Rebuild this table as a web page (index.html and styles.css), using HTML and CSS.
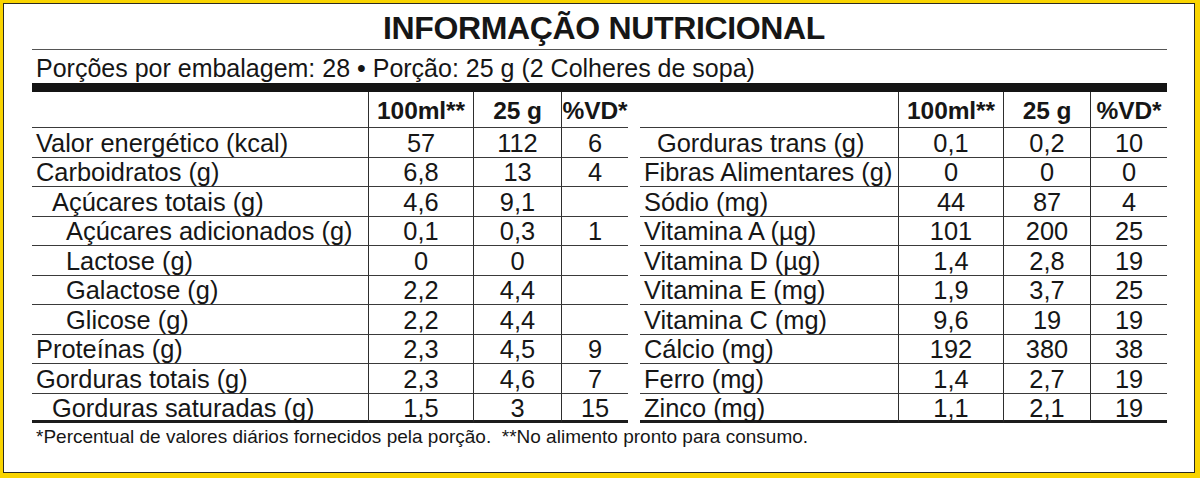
FILE: index.html
```html
<!DOCTYPE html>
<html lang="pt-BR">
<head>
<meta charset="utf-8">
<title>Informação Nutricional</title>
<link rel="stylesheet" href="styles.css">
</head>
<body>
<div class="panel">
  <h1 class="title">INFORMAÇÃO NUTRICIONAL</h1>
  <p class="serving">Porções por embalagem: 28 • Porção: 25 g (2 Colheres de sopa)</p>
  <div class="bar"></div>
  <div class="tables">
    <div class="grid grid-left">
      <div class="hd lab"></div><div class="hd">100ml**</div><div class="hd">25 g</div><div class="hd">%VD*</div>
      <div class="lab">Valor energético (kcal)</div><div>57</div><div>112</div><div>6</div>
      <div class="lab">Carboidratos (g)</div><div>6,8</div><div>13</div><div>4</div>
      <div class="lab in1">Açúcares totais (g)</div><div>4,6</div><div>9,1</div><div></div>
      <div class="lab in2">Açúcares adicionados (g)</div><div>0,1</div><div>0,3</div><div>1</div>
      <div class="lab in2">Lactose (g)</div><div>0</div><div>0</div><div></div>
      <div class="lab in2">Galactose (g)</div><div>2,2</div><div>4,4</div><div></div>
      <div class="lab in2">Glicose (g)</div><div>2,2</div><div>4,4</div><div></div>
      <div class="lab">Proteínas (g)</div><div>2,3</div><div>4,5</div><div>9</div>
      <div class="lab">Gorduras totais (g)</div><div>2,3</div><div>4,6</div><div>7</div>
      <div class="lab in1 last">Gorduras saturadas (g)</div><div class="last">1,5</div><div class="last">3</div><div class="last">15</div>
    </div>
    <div class="grid grid-right">
      <div class="hd lab"></div><div class="hd">100ml**</div><div class="hd">25 g</div><div class="hd">%VD*</div>
      <div class="lab inr">Gorduras trans (g)</div><div>0,1</div><div>0,2</div><div>10</div>
      <div class="lab">Fibras Alimentares (g)</div><div>0</div><div>0</div><div>0</div>
      <div class="lab">Sódio (mg)</div><div>44</div><div>87</div><div>4</div>
      <div class="lab">Vitamina A (µg)</div><div>101</div><div>200</div><div>25</div>
      <div class="lab">Vitamina D (µg)</div><div>1,4</div><div>2,8</div><div>19</div>
      <div class="lab">Vitamina E (mg)</div><div>1,9</div><div>3,7</div><div>25</div>
      <div class="lab">Vitamina C (mg)</div><div>9,6</div><div>19</div><div>19</div>
      <div class="lab">Cálcio (mg)</div><div>192</div><div>380</div><div>38</div>
      <div class="lab">Ferro (mg)</div><div>1,4</div><div>2,7</div><div>19</div>
      <div class="lab last">Zinco (mg)</div><div class="last">1,1</div><div class="last">2,1</div><div class="last">19</div>
    </div>
  </div>
  <p class="note">*Percentual de valores diários fornecidos pela porção.&nbsp; **No alimento pronto para consumo.</p>
</div>
</body>
</html>
```

FILE: styles.css
```css
* { box-sizing: border-box; }

html, body {
  margin: 0;
  padding: 0;
  background: #f9d400;
}

body {
  width: 1200px;
  height: 478px;
  padding: 3px 5px 5px 3px;
  font-family: "Liberation Sans", Arial, Helvetica, sans-serif;
  color: #161616;
}

.panel {
  width: 1192px;
  height: 470px;
  background: #ffffff;
  border: 1px solid #2b2a20;
  padding: 0 27px 0 28px;
}

.title {
  margin: 0;
  height: 46px;
  padding: 4px 0 0 9px;
  font-size: 32px;
  line-height: 41px;
  font-weight: 700;
  letter-spacing: -0.35px;
  text-align: center;
  border-bottom: 1px solid #555;
}

.serving {
  margin: 0;
  height: 33px;
  padding: 5px 0 0 4px;
  font-size: 25px;
  line-height: 27px;
  white-space: nowrap;
}

.bar {
  height: 9px;
  background: #141414;
}

.tables {
  display: flex;
  gap: 12px;
}

.grid {
  display: grid;
  grid-template-rows: 36px;
  grid-auto-rows: 29.5px;
}

.grid-left {
  grid-template-columns: 336px 105px 88px 67px;
}

.grid-right {
  grid-template-columns: 258px 105px 87px 77px;
}

.grid > div {
  border-bottom: 1px solid #3a3a3a;
  border-left: 1px solid #2e2e2e;
  font-size: 25.4px;
  line-height: 27px;
  padding-top: 1.5px;
  text-align: center;
  white-space: nowrap;
}

.grid > div.lab {
  border-left: none;
  text-align: left;
  padding-left: 4px;
}

.grid > div.in1 { padding-left: 20px; }
.grid > div.in2 { padding-left: 34px; }
.grid > div.inr { padding-left: 17px; }

.grid > div.hd {
  height: 36px;
  font-weight: 700;
  font-size: 24.5px;
  line-height: 26px;
  padding-top: 6px;
  letter-spacing: -0.1px;
}

.grid > div.last {
  border-bottom: 3px solid #1c1c1c;
}

.note {
  margin: 0;
  padding: 4px 0 0 4px;
  font-size: 19px;
  line-height: 20px;
  white-space: nowrap;
}
```
